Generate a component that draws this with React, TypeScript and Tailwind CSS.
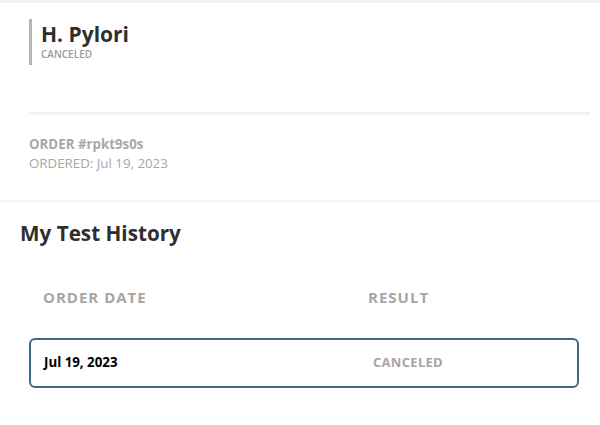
import React from 'react';

const font = { fontFamily: '"Open Sans", "Noto Sans", Arial, sans-serif' };

const App = () => {
    return (
        <div className="min-h-[425px] bg-white text-[#333]" style={font}>
            <div className="h-[3px] bg-[#f1f2f4]" />

            <div className="bg-white pl-[29px] pr-[10px] pt-[16px] pb-[27px] shadow-[0_2px_3px_rgba(0,0,0,0.05)]">
                <div className="border-l-[3px] border-[#b5b5b5] pl-[9px] pt-[1px] h-[46px]">
                    <h1 className="text-[21px] font-bold leading-[28px] text-[#2f2f2f]">H. Pylori</h1>
                    <div className="text-[10px] font-semibold leading-[12px] text-[#9a9a9a] uppercase">Canceled</div>
                </div>

                <div className="mt-[47px] h-[2px] bg-[#f0f0f0] shadow-[0_1px_2px_rgba(0,0,0,0.04)]" />

                <div className="mt-[21px] text-[13.3px] leading-[19px] text-[#a8a8a8]">
                    <div className="font-bold">ORDER #rpkt9s0s</div>
                    <div>ORDERED: Jul 19, 2023</div>
                </div>
            </div>

            <div className="pt-[19px]">
                <h2 className="px-[20px] text-[20.7px] font-bold leading-[28px] text-[#2f2f2f]">My Test History</h2>

                <div className="mt-[40px] flex px-[43px] text-[15px] font-bold leading-[20px] tracking-[1px] text-[#a6a6a6]">
                    <div className="w-[325px]">ORDER DATE</div>
                    <div>RESULT</div>
                </div>

                <div className="ml-[29px] mr-[21px] mt-[31px] flex h-[50px] items-center rounded-[6px] border-2 border-[#386b8c] pl-[13px]">
                    <div className="w-[329px] text-[13.3px] font-bold text-black">Jul 19, 2023</div>
                    <div className="text-[13px] font-bold tracking-[0.3px] text-[#a6a6a6]">CANCELED</div>
                </div>
            </div>
        </div>
    );
};

export default App;
